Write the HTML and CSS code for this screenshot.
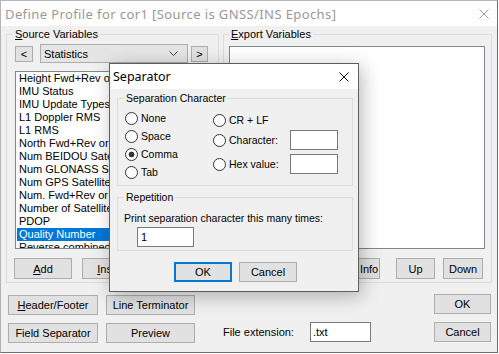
FILE: index.html
```html
<!DOCTYPE html>
<html lang="en">
<head>
  <meta charset="UTF-8" />
  <title>Define Profile for cor1</title>
  <link rel="stylesheet" href="styles.css">
</head>
<body>

  <div class="window">
    <div class="titlebar">
      <span class="title">Define Profile for cor1 [Source is GNSS/INS Epochs]</span>
      <svg class="close" width="10" height="10" viewBox="0 0 10 10"><path d="M0.5 0.5L9.5 9.5M9.5 0.5L0.5 9.5" stroke="#9a9a9a" stroke-width="1" fill="none"/></svg>
    </div>

    <div class="client">
      <div class="groups">
        <fieldset class="group source">
          <legend><u>S</u>ource Variables</legend>
          <div class="nav-row">
            <button class="btn arrow">&lt;</button>
            <div class="combo">
              <span>Statistics</span>
              <svg width="9" height="5" viewBox="0 0 9 5"><path d="M0.5 0.5L4.5 4.5L8.5 0.5" stroke="#444" stroke-width="1" fill="none"/></svg>
            </div>
            <button class="btn arrow next">&gt;</button>
          </div>
          <ul class="listbox source-list">
            <li>Height Fwd+Rev or Combined Separation</li>
            <li>IMU Status</li>
            <li>IMU Update Types</li>
            <li>L1 Doppler RMS</li>
            <li>L1 RMS</li>
            <li>North Fwd+Rev or Combined Separation</li>
            <li>Num BEIDOU Satellites</li>
            <li>Num GLONASS Satellites</li>
            <li>Num GPS Satellites</li>
            <li>Num. Fwd+Rev or Combined Satellites</li>
            <li>Number of Satellites</li>
            <li>PDOP</li>
            <li class="selected">Quality Number</li>
            <li>Reverse combined Separation</li>
          </ul>
          <div class="btn-row">
            <button class="btn"><u>A</u>dd</button>
            <button class="btn"><u>I</u>nsert</button>
            <button class="btn">Add All</button>
          </div>
        </fieldset>

        <fieldset class="group export">
          <legend><u>E</u>xport Variables</legend>
          <ul class="listbox export-list"></ul>
          <div class="btn-row">
            <button class="btn">Remove</button>
            <button class="btn info">More Info</button>
            <button class="btn up">Up</button>
            <button class="btn down">Down</button>
          </div>
        </fieldset>
      </div>

      <div class="footer">
        <div class="btn-grid">
          <button class="btn"><u>H</u>eader/Footer</button>
          <button class="btn">Line Terminator</button>
          <button class="btn">Field Separator</button>
          <button class="btn">Preview</button>
        </div>
        <div class="ext">
          <span>File extension:</span>
          <input class="field ext-input" type="text" value=".txt">
        </div>
        <div class="ok-col">
          <button class="btn">OK</button>
          <button class="btn">Cancel</button>
        </div>
      </div>
    </div>

    <div class="dialog">
      <div class="dlg-title">
        <span>Separator</span>
        <svg width="10" height="10" viewBox="0 0 10 10"><path d="M0.5 0.5L9.5 9.5M9.5 0.5L0.5 9.5" stroke="#111" stroke-width="1" fill="none"/></svg>
      </div>
      <div class="dlg-body">
        <fieldset class="dgroup">
          <legend>Separation Character</legend>
          <div class="sep-grid">
            <div class="col">
              <label class="opt"><span class="radio"></span>None</label>
              <label class="opt"><span class="radio"></span>Space</label>
              <label class="opt"><span class="radio checked"></span>Comma</label>
              <label class="opt"><span class="radio"></span>Tab</label>
            </div>
            <div class="col right">
              <label class="opt crlf"><span class="radio"></span>CR + LF</label>
              <div class="opt-field">
                <label class="opt"><span class="radio"></span>Character:</label>
                <input class="field small" type="text" value="">
              </div>
              <div class="opt-field">
                <label class="opt"><span class="radio"></span>Hex value:</label>
                <input class="field small" type="text" value="">
              </div>
            </div>
          </div>
        </fieldset>

        <fieldset class="dgroup rep-group">
          <legend>Repetition</legend>
          <div class="rep">
            <div class="rep-text">Print separation character this many times:</div>
            <input class="field rep-input" type="text" value="1">
          </div>
        </fieldset>

        <div class="dlg-buttons">
          <button class="btn default">OK</button>
          <button class="btn">Cancel</button>
        </div>
      </div>
    </div>
  </div>

</body>
</html>
```

FILE: styles.css
```css
* {
  box-sizing: border-box;
}

body {
  margin: 0;
  font-family: "Liberation Sans", Arial, sans-serif;
  font-size: 11px;
  color: #000;
  background-color: #fff;
}

.window {
  position: relative;
  width: 498px;
  height: 353px;
  border: 1px solid #6f6f6f;
  border-left-color: #b5b5b5;
  border-top-color: #b5b5b5;
  background-color: #f0f0f0;
}

.titlebar {
  height: 25px;
  background-color: #fff;
  display: flex;
  align-items: center;
  justify-content: space-between;
  padding: 0 8px 0 4px;
}

.title {
  font-family: "Noto Sans", sans-serif;
  font-size: 13px;
  letter-spacing: 0.4px;
  color: #999;
}

.client {
  padding: 2px 5px 0 5px;
}

.groups {
  display: flex;
  gap: 4px;
}

fieldset {
  margin: 0;
  min-width: 0;
  border: 1px solid #dcdcdc;
}

legend {
  line-height: 13px;
  padding: 0 2px;
}

.group {
  display: flex;
  flex-direction: column;
}

.source {
  width: 213px;
  padding: 3px 9px 3px 8px;
}

.source legend {
  margin-left: -2px;
}

.export {
  flex: 1;
  padding: 5px 6px 3px 5px;
}

.nav-row {
  display: flex;
  align-items: center;
  height: 19px;
}

.btn {
  background-color: #e1e1e1;
  border: 1px solid #adadad;
  font-family: inherit;
  font-size: 11px;
  color: #000;
  padding: 0;
  height: 21px;
  white-space: nowrap;
}

.arrow {
  width: 18px;
  height: 16px;
  margin-right: 7px;
}

.arrow.next {
  width: 17px;
  margin-left: 3px;
  margin-right: 0;
}

.combo {
  width: 148px;
  height: 19px;
  background-color: #e5e5e5;
  border: 1px solid #acacac;
  display: flex;
  align-items: center;
  padding-left: 3px;
}

.combo svg {
  margin-left: auto;
  margin-right: 9px;
}

.listbox {
  list-style: none;
  margin: 0;
  padding: 0;
  background-color: #fff;
  border: 1px solid #828790;
  overflow: hidden;
}

.listbox li {
  line-height: 13px;
  padding-left: 2px;
  margin-left: 1px;
  white-space: nowrap;
}

.listbox li.selected {
  background-color: #0078d7;
  color: #fff;
}

.source-list {
  height: 178px;
  margin: 8px 0 9px;
}

.export-list {
  height: 203px;
  margin-bottom: 9px;
}

.btn-row {
  display: flex;
  gap: 10px;
}

.source .btn-row .btn {
  width: 58px;
}

.source .btn-row {
  margin-left: -1px;
}

.export .btn-row .btn {
  width: 58px;
}

.export .btn-row .info {
  width: 50px;
  margin-left: auto;
}

.export .btn-row .up {
  width: 39px;
  margin-left: 6px;
}

.export .btn-row .down {
  width: 40px;
  margin-left: -2px;
  margin-right: 2px;
}

.footer {
  display: flex;
  margin: 11px 1px 0 2px;
}

.btn-grid {
  display: grid;
  grid-template-columns: 90px 89px;
  grid-auto-rows: 20px;
  gap: 8px;
  margin-top: 1px;
}

.btn-grid .btn,
.ok-col .btn {
  height: 20px;
}

.ext {
  display: flex;
  align-items: center;
  align-self: flex-end;
  margin: 0 0 1px 28px;
}

.ext span {
  width: 87px;
}

.field {
  background-color: #fff;
  border: 1px solid #7a7a7a;
  font-family: inherit;
  font-size: 11px;
  color: #000;
  padding: 0 0 0 2px;
  margin: 0;
  outline: none;
}

.ext-input {
  width: 61px;
  height: 20px;
}

.ok-col {
  margin-left: auto;
  display: flex;
  flex-direction: column;
  gap: 8px;
}

.ok-col .btn {
  width: 57px;
}

/* separator dialog */

.dialog {
  position: absolute;
  left: 108px;
  top: 62px;
  width: 250px;
  background-color: #f0f0f0;
  border: 1px solid #5f5f5f;
  box-shadow: 3px 4px 18px rgba(0, 0, 0, 0.28);
}

.dlg-title {
  height: 25px;
  background-color: #fff;
  display: flex;
  align-items: center;
  justify-content: space-between;
  padding: 0 9px 0 3px;
  font-family: "Noto Sans", sans-serif;
  font-size: 12.5px;
}

.dlg-body {
  padding: 3px 5px 9px 7px;
  font-size: 10.5px;
}

.dgroup {
  padding: 0;
}

.dgroup legend {
  margin-left: 6px;
}

.sep-grid {
  display: grid;
  grid-template-columns: 88px 125px;
  padding: 4px 0 4px 7px;
}

.col {
  display: flex;
  flex-direction: column;
}

.col.right {
  padding-top: 2px;
}

.opt {
  display: flex;
  align-items: center;
  height: 18px;
}

.crlf {
  margin-bottom: 1px;
}

.radio {
  width: 13px;
  height: 13px;
  border: 1px solid #333;
  border-radius: 50%;
  background-color: #fff;
  margin-right: 3px;
  flex-shrink: 0;
}

.radio.checked {
  background: radial-gradient(circle, #333 0, #333 2.6px, #fff 3.2px);
}

.opt-field {
  display: flex;
  align-items: center;
  justify-content: space-between;
  height: 20px;
  margin-bottom: 4px;
}

.field.small {
  width: 48px;
  height: 20px;
}

.rep-group {
  margin-top: 5px;
}

.rep {
  padding: 8px 0 3px 6px;
}

.rep-text {
  line-height: 13px;
}

.rep-input {
  display: block;
  width: 57px;
  height: 20px;
  margin: 2px 0 0 13px;
  padding-left: 3px;
}

.dlg-buttons {
  display: flex;
  gap: 7px;
  margin-top: 11px;
  padding-left: 57px;
}

.dlg-buttons .btn {
  width: 58px;
  height: 20px;
}

.btn.default {
  border-color: #0078d7;
  box-shadow: inset 0 0 0 1px #0078d7;
}
```
